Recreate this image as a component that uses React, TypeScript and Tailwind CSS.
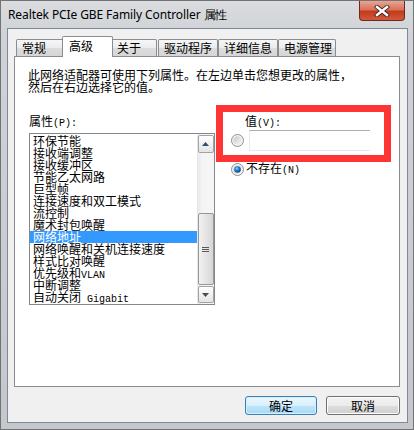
const cjk = "font-['Noto_Sans_CJK_SC',sans-serif]";
const half = "font-['Liberation_Mono',monospace] text-[10px]";

const items: React.ReactNode[] = [
  '环保节能',
  '接收端调整',
  '接收缓冲区',
  '节能乙太网路',
  '巨型帧',
  '连接速度和双工模式',
  '流控制',
  '魔术封包唤醒',
  '网络地址',
  '网络唤醒和关机连接速度',
  '样式比对唤醒',
  <>
    优先级和<span className={half}>VLAN</span>
  </>,
  '中断调整',
  <>
    自动关闭<span className={half}> Gigabit</span>
  </>,
];

const tabs = [
  { label: '常规', w: 'w-[48px]' },
  { label: '高级', w: 'w-[51px]', active: true },
  { label: '关于', w: 'w-[46px]' },
  { label: '驱动程序', w: 'w-[60px] ml-px' },
  { label: '详细信息', w: 'w-[60px]' },
  { label: '电源管理', w: 'w-[58px]' },
];

function Radio({ checked }: { checked?: boolean }) {
  return (
    <svg width="13" height="13" viewBox="0 0 13 13" className="shrink-0">
      <defs>
        <linearGradient id={checked ? 'rg1' : 'rg0'} x1="0" y1="0" x2="1" y2="1">
          <stop offset="0" stopColor="#c9c9c9" />
          <stop offset="1" stopColor="#f8f8f8" />
        </linearGradient>
        <radialGradient id="dot" cx="0.4" cy="0.35" r="0.7">
          <stop offset="0" stopColor="#8fd3ff" />
          <stop offset="0.45" stopColor="#1f7fd0" />
          <stop offset="1" stopColor="#0a3f78" />
        </radialGradient>
      </defs>
      <circle cx="6.5" cy="6.5" r="6" fill="#f4f4f4" stroke="#8e8f8f" />
      <circle cx="6.5" cy="6.5" r="4.3" fill={`url(#${checked ? 'rg1' : 'rg0'})`} />
      {checked && <circle cx="6.5" cy="6.5" r="3.3" fill="url(#dot)" />}
    </svg>
  );
}

function CloseButton() {
  return (
    <div className="absolute top-0 right-[8px] w-[46px] h-[20px] rounded-b-[4px] border border-t-0 border-[#6b2a1e] bg-[linear-gradient(#e9a595,#d9735a_45%,#c23c1c_55%,#d4583a)] flex items-center justify-center">
      <svg width="16" height="12" viewBox="0 0 16 12">
        <path d="M3 2 L13 10 M13 2 L3 10" stroke="#3a2a2a" strokeWidth="4.2" strokeLinecap="square" />
        <path d="M3 2 L13 10 M13 2 L3 10" stroke="#ffffff" strokeWidth="2.4" strokeLinecap="square" />
      </svg>
    </div>
  );
}

function Scrollbar() {
  return (
    <div className="w-[17px] h-full bg-[linear-gradient(90deg,#e6e6e6,#f5f5f5_30%,#f5f5f5)] flex flex-col items-center pt-px pb-px">
      <div className="w-[16px] h-[18px] rounded-[2px] border border-[#a3a3a3] bg-[linear-gradient(#ffffff,#e4e4e4)] flex items-center justify-center">
        <svg width="7" height="4" viewBox="0 0 7 4">
          <path d="M0 4 L3.5 0 L7 4 Z" fill="#2b4f7a" />
        </svg>
      </div>
      <div className="mt-[60px] w-[16px] h-[72px] rounded-[2px] border border-[#979797] bg-[linear-gradient(90deg,#f2f2f2,#e4e4e4_50%,#d6d6d6)] flex flex-col items-center justify-center gap-px">
        <div className="w-[7px] h-px bg-[#5a5a5a]" />
        <div className="w-[7px] h-px bg-[#5a5a5a]" />
        <div className="w-[7px] h-px bg-[#5a5a5a]" />
      </div>
      <div className="mt-auto w-[16px] h-[17px] rounded-[2px] border border-[#a3a3a3] bg-[linear-gradient(#ffffff,#e4e4e4)] flex items-center justify-center">
        <svg width="7" height="4" viewBox="0 0 7 4">
          <path d="M0 0 L7 0 L3.5 4 Z" fill="#4d4d4d" />
        </svg>
      </div>
    </div>
  );
}

export default function App() {
  return (
    <div className={`relative w-[414px] h-[430px] flex flex-col border border-[#737373] bg-[linear-gradient(#dadcdf,#cfd2d6_8%,#c4c7cb)] text-black ${cjk}`}>
      <div className="h-[27px] shrink-0 flex items-center pl-[7px]">
        <span className="font-['Noto_Sans',sans-serif] text-[12px] leading-none tracking-[-0.1px] text-black">
          Realtek PCIe GBE Family Controller 属性
        </span>
      </div>
      <CloseButton />

      <div className="flex-1 ml-[6px] mr-[5px] mb-[6px] border border-[#7f8895] bg-[#f0f0f0] flex flex-col pl-[6px] pr-[7px] pt-[7px] pb-[7px]">
        <div className="relative z-10 h-[20px] flex items-end pl-[2px] text-[12px]">
          {tabs.map((t) =>
            t.active ? (
              <div
                key={t.label}
                className={`${t.w} -mx-[2px] h-[21px] -mb-px bg-white border border-b-0 border-[#898c95] rounded-t-[2px] pl-[6px] pb-[3px] flex items-center leading-none z-10`}
              >
                {t.label}
              </div>
            ) : (
              <div
                key={t.label}
                className={`${t.w} h-[17px] border border-b-0 border-[#898c95] rounded-t-[2px] bg-[linear-gradient(#f6f6f6,#ebebeb_50%,#dcdcdc_51%,#d6d6d6)] pl-[5px] flex items-center leading-none`}
              >
                {t.label}
              </div>
            ),
          )}
        </div>

        <div className="h-[331px] shrink-0 border border-[#898c95] bg-white pt-[12px] text-[12px] leading-[12px]">
          <p className="pl-[13px]">
            此网络适配器可使用下列属性。在左边单击您想更改的属性，
            <br />
            然后在右边选择它的值。
          </p>

          <div className="mt-[12px] flex items-start">
            <div className="ml-[14px] w-[186px] pt-[10px]">
              <div>
                属性<span className={half}>(P):</span>
              </div>
              <div className="mt-[3px] h-[172px] border border-[#828790] bg-white flex">
                <ul className="flex-1 pt-px">
                  {items.map((it, i) => (
                    <li
                      key={i}
                      className={`h-[12px] pl-[3px] leading-[12px] whitespace-nowrap ${i === 8 ? 'bg-[#3399ff] text-white' : ''}`}
                    >
                      {it}
                    </li>
                  ))}
                </ul>
                <Scrollbar />
              </div>
            </div>

            <div className="ml-px flex flex-col">
              <div className="w-[175px] h-[57px] border-[7px] border-[#ff3535] flex flex-col pt-[3px]">
                <div className="pl-[22px] h-[12px]">
                  值<span className={half}>(V):</span>
                </div>
                <div className="mt-[3px] flex items-center">
                  <div className="ml-[8px]">
                    <Radio />
                  </div>
                  <div className="ml-[5px] w-[121px] h-[21px] border border-[#e3e9ef] border-t-[#abadb3] border-r-0 bg-white" />
                </div>
              </div>
              <div className="mt-px h-[12px] flex items-center">
                <div className="ml-[15px]">
                  <Radio checked />
                </div>
                <span className="ml-[2px]">
                  不存在<span className={half}>(N)</span>
                </span>
              </div>
            </div>
          </div>
        </div>

        <div className="mt-[9px] flex justify-end gap-[9px] text-[12px] pr-[-1px]">
          <button className="w-[72px] h-[19px] rounded-[3px] border border-[#3c7fb1] bg-[linear-gradient(#eaf6fd,#d9f0fc_50%,#bee6fd_51%,#a7d9f5)] shadow-[inset_0_0_0_1px_#d4f0fe] leading-none flex items-center justify-center">
            确定
          </button>
          <button className="w-[74px] h-[19px] rounded-[3px] border border-[#707070] bg-[linear-gradient(#f2f2f2,#ebebeb_50%,#dddddd_51%,#cfcfcf)] shadow-[inset_0_0_0_1px_#fcfcfc] leading-none flex items-center justify-center">
            取消
          </button>
        </div>
      </div>
    </div>
  );
}
